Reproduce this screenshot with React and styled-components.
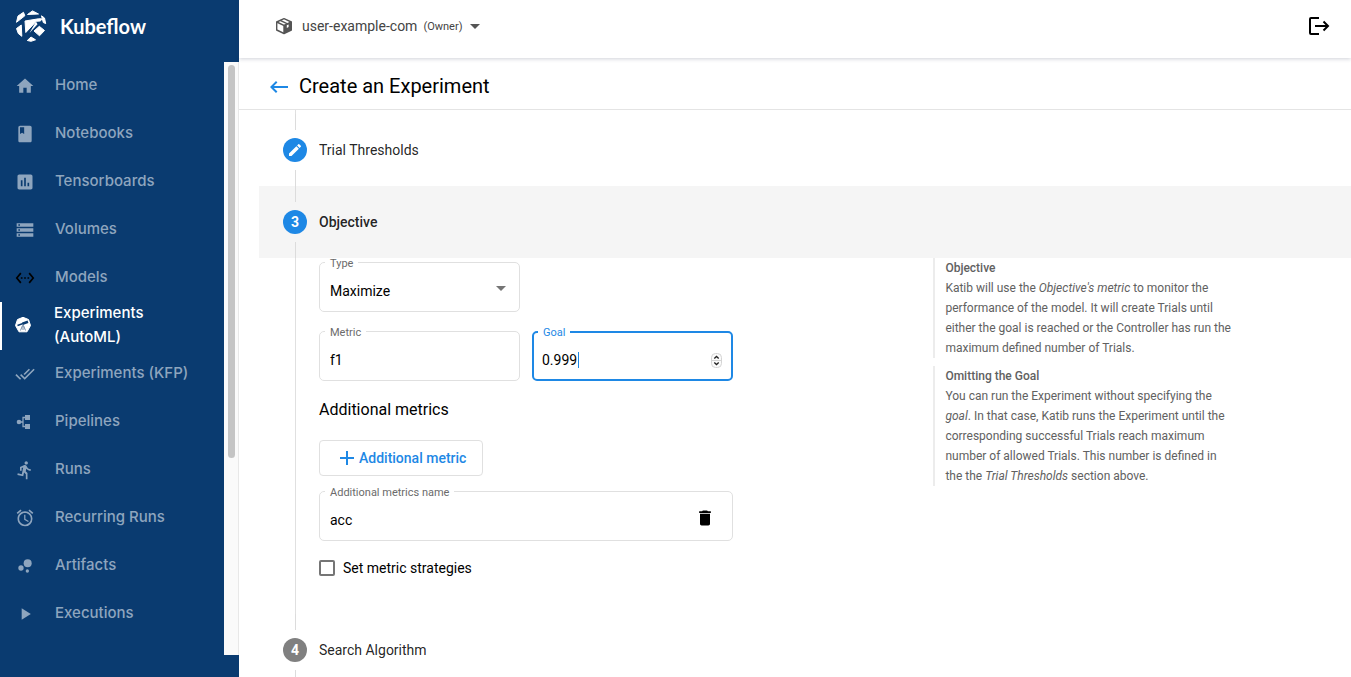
import React from "react";
import styled, { createGlobalStyle, css } from "styled-components";
import {
  MdHome, MdClass, MdInsertChart, MdStorage, MdSettingsEthernet, MdDoneAll,
  MdDirectionsRun, MdAccessAlarm, MdBubbleChart, MdPlayArrow, MdKeyboardBackspace,
  MdCreate, MdAdd, MdDelete,
} from "react-icons/md";

const GlobalStyle = createGlobalStyle`
  * { box-sizing: border-box; }
  body {
    margin: 0;
    background: #fff;
    color: #000;
    font: 400 14px/20px Roboto, sans-serif;
    overflow: hidden;
  }
  button, input, select { font: inherit; color: inherit; }
`;

const BLUE = "#1e88e5";
const NAVY = "#0a3b70";
const LINE = "#e0e0e0";

const Shell = styled.div`
  display: flex;
  height: 100vh;
  overflow: hidden;
`;

/* ---------- sidebar ---------- */
const Sidebar = styled.aside`
  display: flex;
  flex-direction: column;
  flex: 0 0 239px;
  background: ${NAVY};
  padding-bottom: 22px;
`;
const Brand = styled.a`
  display: flex;
  align-items: center;
  gap: 13px;
  height: 62px;
  padding: 0 0 10px 15px;
  flex: none;
  color: #fff;
  font: 700 20px/24px Lato, sans-serif;
  text-decoration: none;
`;
const NavScroll = styled.div`
  display: flex;
  flex: 1;
  min-height: 0;
`;
const Nav = styled.nav`
  flex: 1;
  overflow: hidden;
`;
const NavLink = styled.a`
  display: flex;
  align-items: center;
  gap: 20px;
  height: 48px;
  padding: 0 15px 2px;
  color: #8ea5be;
  font: 500 15px/24px Inter, sans-serif;
  text-decoration: none;
  ${(p) => p.$active && css`
    gap: 21px;
    padding-left: 11px;
    border-left: 2px solid #fff;
    color: #fff;
  `}
`;
const NavIcon = styled.span`
  display: flex;
  flex: none;
  padding-top: 2px;
  color: ${(p) => p.$color || "inherit"};
`;
const ScrollTrack = styled.div`
  flex: 0 0 15px;
  padding: 3px 3px 3px 4px;
  background: #fafafa;
  border-right: 1px solid #e8e8e8;
`;
const ScrollThumb = styled.div`
  height: 67%;
  border-radius: 4px;
  background: #c4c4c4;
`;

/* ---------- top bars ---------- */
const Main = styled.main`
  display: flex;
  flex-direction: column;
  flex: 1;
  min-width: 0;
`;
const TopBar = styled.header`
  display: flex;
  align-items: center;
  justify-content: space-between;
  flex: none;
  height: 58px;
  padding: 0 21px 6px 36px;
  box-shadow: 0 1px 4px rgba(40, 50, 80, 0.22);
`;
const Namespace = styled.button`
  display: flex;
  align-items: center;
  gap: 6px;
  padding: 0;
  border: 0;
  background: none;
  color: #444;
`;
const NamespaceName = styled.span`
  padding-left: 3px;
`;
const Role = styled.small`
  padding-top: 2px;
  font-size: 11px;
  line-height: 20px;
`;
const IconButton = styled.button`
  display: flex;
  margin: ${(p) => p.$margin || 0};
  padding: 0;
  border: 0;
  background: none;
  color: ${(p) => p.$color || "#000"};
`;
const TitleBar = styled.div`
  display: flex;
  align-items: center;
  gap: 8px;
  flex: none;
  height: 52px;
  padding: 4px 28px 0;
  border-bottom: 1px solid #e4e4e4;
`;
const Title = styled.h1`
  margin: 0;
  font-size: 20px;
  font-weight: 400;
  line-height: 24px;
`;

/* ---------- stepper ---------- */
const Stepper = styled.div`
  flex: 1;
  min-height: 0;
  margin-left: 20px;
  overflow: hidden;
`;
const Tail = styled.div`
  height: 4px;
  margin-left: 36px;
  border-left: 1px solid ${LINE};
`;
const StepHeader = styled.div`
  display: flex;
  align-items: center;
  gap: 12px;
  height: 72px;
  padding: 0 24px;
  background: ${(p) => (p.$active ? "#f5f5f5" : "transparent")};
  font-weight: ${(p) => (p.$active ? 500 : 400)};
  color: rgba(0, 0, 0, 0.87);
`;
const Rail = styled.div`
  display: flex;
  flex-direction: column;
  align-items: center;
  gap: 8px;
  width: 24px;
  height: 100%;
  &::before, &::after {
    content: "";
    flex: 1;
    width: 1px;
    margin-left: 1px;
    background: #dcdcdc;
  }
`;
const Badge = styled.span`
  display: flex;
  align-items: center;
  justify-content: center;
  width: 24px;
  height: 24px;
  border-radius: 50%;
  background: ${(p) => (p.$muted ? "#808080" : BLUE)};
  color: #fff;
  font-weight: 700;
`;
const StepBody = styled.div`
  display: grid;
  grid-template-columns: 3fr 2fr;
  column-gap: 24px;
  min-height: 356px;
  margin-left: 36px;
  padding: 0 24px 0 23px;
  border-left: 1px solid ${LINE};
`;

/* ---------- form ---------- */
const Form = styled.form`
  display: flex;
  flex-direction: column;
  align-items: flex-start;
  width: 414px;
`;
const FieldRow = styled.div`
  display: flex;
  gap: 12px;
  width: 100%;
  margin-bottom: ${(p) => p.$after}px;
`;
const Field = styled.fieldset`
  display: flex;
  align-items: center;
  flex: ${(p) => (p.$wide ? "1" : "0 0 201px")};
  min-width: 0;
  height: 54px;
  margin: 0;
  padding: 4px 9px 0 ${(p) => (p.$focused ? 8 : 10)}px;
  border: ${(p) => (p.$focused ? `2px solid ${BLUE}` : `1px solid ${LINE}`)};
  border-radius: 5px;
`;
const Legend = styled.legend`
  height: ${(p) => (p.$focused ? 10 : 8)}px;
  margin-left: ${(p) => (p.$focused ? -4 : -5)}px;
  padding: 0 5px;
  color: ${(p) => (p.$focused ? BLUE : "#6b6b6b")};
  font-size: 11px;
  line-height: 12px;
`;
const TextInput = styled.input`
  flex: ${(p) => (p.$caret ? "0 0 36px" : "1")};
  min-width: 0;
  height: 20px;
  padding: 0;
  border: 0;
  outline: 0;
  background: none;
  appearance: textfield;
  &::-webkit-inner-spin-button { display: none; }
`;
const Select = styled.select`
  flex: 1;
  height: 20px;
  padding: 0;
  border: 0;
  outline: 0;
  background: none;
  appearance: none;
`;
const Triangle = styled.span`
  border: 5px solid transparent;
  border-top-color: ${(p) => p.$color};
  border-bottom-width: 0;
  margin: ${(p) => p.$margin || 0};
`;
const Caret = styled.span`
  width: 1px;
  height: 16px;
  background: ${BLUE};
  margin-right: auto;
`;
const SubTitle = styled.h2`
  margin: 0 0 18px;
  font-size: 16px;
  font-weight: 400;
  line-height: 24px;
`;
const AddButton = styled.button`
  display: flex;
  align-items: center;
  height: 36px;
  margin-bottom: 11px;
  padding: 0 16px 0 15px;
  border: 1px solid ${LINE};
  border-radius: 4px;
  background: #fff;
  color: ${BLUE};
  font-weight: 500;
`;
const CheckLabel = styled.label`
  display: flex;
  align-items: center;
  gap: 8px;
`;
const Check = styled.input`
  width: 16px;
  height: 16px;
  margin: 0;
  appearance: none;
  border: 2px solid #757575;
  border-radius: 2px;
  &:checked { background: ${BLUE}; border-color: ${BLUE}; }
`;

/* ---------- help ---------- */
const HelpColumn = styled.aside`
  display: flex;
  flex-direction: column;
  gap: 8px;
  max-width: 300px;
`;
const Help = styled.section`
  padding-left: 10px;
  border-left: 2px solid #ececec;
  color: #616161;
  font-size: 12px;
  line-height: 20px;
`;
const HelpTitle = styled.h3`
  margin: 0;
  font-size: 12px;
  font-weight: 500;
`;
const HelpText = styled.p`
  margin: 0;
`;

/* ---------- drawings ---------- */
const KubeflowLogo = () => (
  <svg width="32" height="32" viewBox="0 0 32 32" fill="#fff" stroke="#fff" strokeWidth="1" strokeLinejoin="round" aria-hidden="true">
    <path d="M12.500 4.500 17.500 .9 23.500 4Z" />
    <path d="M8.500 2.300 3 6 1.500 12.300 9.800 5.800Z" />
    <path d="M10 11 23.500 8.800 26.800 8.800 25.500 11 21.300 11.300 10.800 22.500Z" />
    <path d="M26.500 5.800 29.500 8 30.700 13.600 28.300 12.500Z" />
    <path d="M19 21 24.300 16.300 29.500 20.500 24.500 25.800Z" />
    <path d="M6.300 15 6.800 26.300 3.300 23.500 1.500 18.500Z" />
    <path d="M12.300 30.500 16 27 20.500 29.800 16 31.300Z" />
    <path d="M14.500 23 22.500 14.300 21 11.500Z" stroke="none" />
  </svg>
);
const TelescopeIcon = () => (
  <svg width="20" height="20" viewBox="0 1 20 20" aria-hidden="true">
    <path fill="#fff" d="M10 2.300 15.500 4.500 17.500 10.500 14 16.800H6L2.500 10.500 4.500 4.500Z" stroke="#fff" strokeLinejoin="round" />
    <path d="M4.500 10.500 10 8.600" stroke={NAVY} strokeWidth="1.600" />
    <path d="M9.500 8.700 15 6.800" stroke={NAVY} strokeWidth="2.600" />
    <path d="M10 10v5M9.500 10.500 7.500 15.500M10.500 10.500 12.500 15.500" stroke="#7289a5" strokeWidth="1" fill="none" />
  </svg>
);
const PipelineIcon = () => (
  <svg width="20" height="20" viewBox="0 0 20 20" fill="currentColor" aria-hidden="true">
    <circle cx="4" cy="10" r="2.300" />
    <path d="M10 3h5v5h-5zM10 12h5v5h-5z" />
    <path d="M4 10h4M11 5.500H8v9h3" fill="none" stroke="currentColor" strokeWidth="1.300" />
  </svg>
);
const BoxIcon = () => (
  <svg width="18" height="18" viewBox="0 0 18 18" aria-hidden="true">
    <path d="M9 1.700 16.300 5V13L9 16.500 1.700 13V5Z" fill="#fff" stroke="#555" strokeWidth="1.400" strokeLinejoin="round" />
    <path d="M9 8.500 16.300 5V13L9 16.500Z" fill="#555" />
    <path d="M1.700 5 9 8.500 16.300 5M9 8.500V16M5.200 3.400 12.500 6.800" fill="none" stroke="#555" strokeWidth="1.400" />
    <path d="M11.800 8.300v2.700l1.800-.9V7.400z" fill="#fff" />
  </svg>
);
const LogoutIcon = () => (
  <svg width="22" height="20" viewBox="0 0 22 20" fill="none" stroke="currentColor" strokeWidth="2" aria-hidden="true">
    <path d="M11 2H3Q2 2 2 3V17Q2 18 3 18H11" />
    <path d="M7 10H20M15.500 5.500 20 10 15.500 14.500" />
  </svg>
);
const StepperArrows = () => (
  <svg width="11" height="15" viewBox="0 0 11 15" fill="none" aria-hidden="true">
    <rect x=".5" y=".5" width="10" height="14" rx="4" fill="#fafafa" stroke="#d4d4d4" />
    <path d="M1 7.500h9" stroke="#d4d4d4" />
    <path d="M3.300 5.500 5.500 3.500 7.700 5.500M3.300 9.500 5.500 11.500 7.700 9.500" stroke="#222" strokeWidth="1.300" />
  </svg>
);

const NAV = [
  { label: "Home", Icon: MdHome },
  { label: "Notebooks", Icon: MdClass },
  { label: "Tensorboards", Icon: MdInsertChart },
  { label: "Volumes", Icon: MdStorage },
  { label: "Models", Icon: MdSettingsEthernet, color: "#000" },
  { label: "Experiments (AutoML)", Icon: TelescopeIcon, active: true },
  { label: "Experiments (KFP)", Icon: MdDoneAll },
  { label: "Pipelines", Icon: PipelineIcon },
  { label: "Runs", Icon: MdDirectionsRun },
  { label: "Recurring Runs", Icon: MdAccessAlarm },
  { label: "Artifacts", Icon: MdBubbleChart },
  { label: "Executions", Icon: MdPlayArrow },
];

function Step({ badge, label, active, muted }) {
  return (
    <StepHeader $active={active}>
      <Rail><Badge $muted={muted}>{badge}</Badge></Rail>
      <span>{label}</span>
    </StepHeader>
  );
}

function OutlinedField({ id, label, focused, wide, children }) {
  return (
    <Field $focused={focused} $wide={wide}>
      <Legend $focused={focused}><label htmlFor={id}>{label}</label></Legend>
      {children}
    </Field>
  );
}

export default function App() {
  return (
    <>
      <GlobalStyle />
      <Shell>
        <Sidebar>
          <Brand href="#"><KubeflowLogo />Kubeflow</Brand>
          <NavScroll>
            <Nav>
              {NAV.map(({ label, Icon, active, color }) => (
                <NavLink key={label} href="#" $active={active}>
                  <NavIcon $color={color}><Icon size={20} /></NavIcon>
                  {label}
                </NavLink>
              ))}
            </Nav>
            <ScrollTrack><ScrollThumb /></ScrollTrack>
          </NavScroll>
        </Sidebar>

        <Main>
          <TopBar>
            <Namespace type="button">
              <BoxIcon />
              <NamespaceName>user-example-com</NamespaceName>
              <Role>(Owner)</Role>
              <Triangle $color="#555" $margin="0 0 0 2px" />
            </Namespace>
            <IconButton type="button" aria-label="Log out"><LogoutIcon /></IconButton>
          </TopBar>
          <TitleBar>
            <IconButton type="button" aria-label="Back" $color={BLUE} $margin="2px 0 0"><MdKeyboardBackspace size={24} /></IconButton>
            <Title>Create an Experiment</Title>
          </TitleBar>

          <Stepper>
            <Tail />
            <Step badge={<MdCreate size={16} />} label="Trial Thresholds" />
            <Step badge="3" label="Objective" active />
            <StepBody>
              <Form>
                <FieldRow $after={15}>
                  <OutlinedField id="type" label="Type">
                    <Select id="type" defaultValue="Maximize">
                      <option>Maximize</option>
                      <option>Minimize</option>
                    </Select>
                    <Triangle $color="#757575" $margin="0 4px 5px 0" />
                  </OutlinedField>
                </FieldRow>
                <FieldRow $after={17}>
                  <OutlinedField id="metric" label="Metric">
                    <TextInput id="metric" defaultValue="f1" />
                  </OutlinedField>
                  <OutlinedField id="goal" label="Goal" focused>
                    <TextInput id="goal" type="number" step="0.001" defaultValue="0.999" $caret />
                    <Caret />
                    <StepperArrows />
                  </OutlinedField>
                </FieldRow>
                <SubTitle>Additional metrics</SubTitle>
                <AddButton type="button"><MdAdd size={24} />Additional metric</AddButton>
                <FieldRow $after={17}>
                  <OutlinedField id="extra" label="Additional metrics name" wide>
                    <TextInput id="extra" defaultValue="acc" />
                    <IconButton type="button" aria-label="Delete metric" $margin="0 8px 3px 0"><MdDelete size={20} /></IconButton>
                  </OutlinedField>
                </FieldRow>
                <CheckLabel><Check type="checkbox" />Set metric strategies</CheckLabel>
              </Form>
              <HelpColumn>
                <Help>
                  <HelpTitle>Objective</HelpTitle>
                  <HelpText>
                    Katib will use the <em>Objective's metric</em> to monitor the performance of the
                    model. It will create Trials until either the goal is reached or the Controller
                    has run the maximum defined number of Trials.
                  </HelpText>
                </Help>
                <Help>
                  <HelpTitle>Omitting the Goal</HelpTitle>
                  <HelpText>
                    You can run the Experiment without specifying the <em>goal</em>. In that case,
                    Katib runs the Experiment until the corresponding successful Trials reach maximum
                    number of allowed Trials. This number is defined in the the{" "}
                    <em>Trial Thresholds</em> section above.
                  </HelpText>
                </Help>
              </HelpColumn>
            </StepBody>
            <Step badge="4" label="Search Algorithm" muted />
          </Stepper>
        </Main>
      </Shell>
    </>
  );
}
